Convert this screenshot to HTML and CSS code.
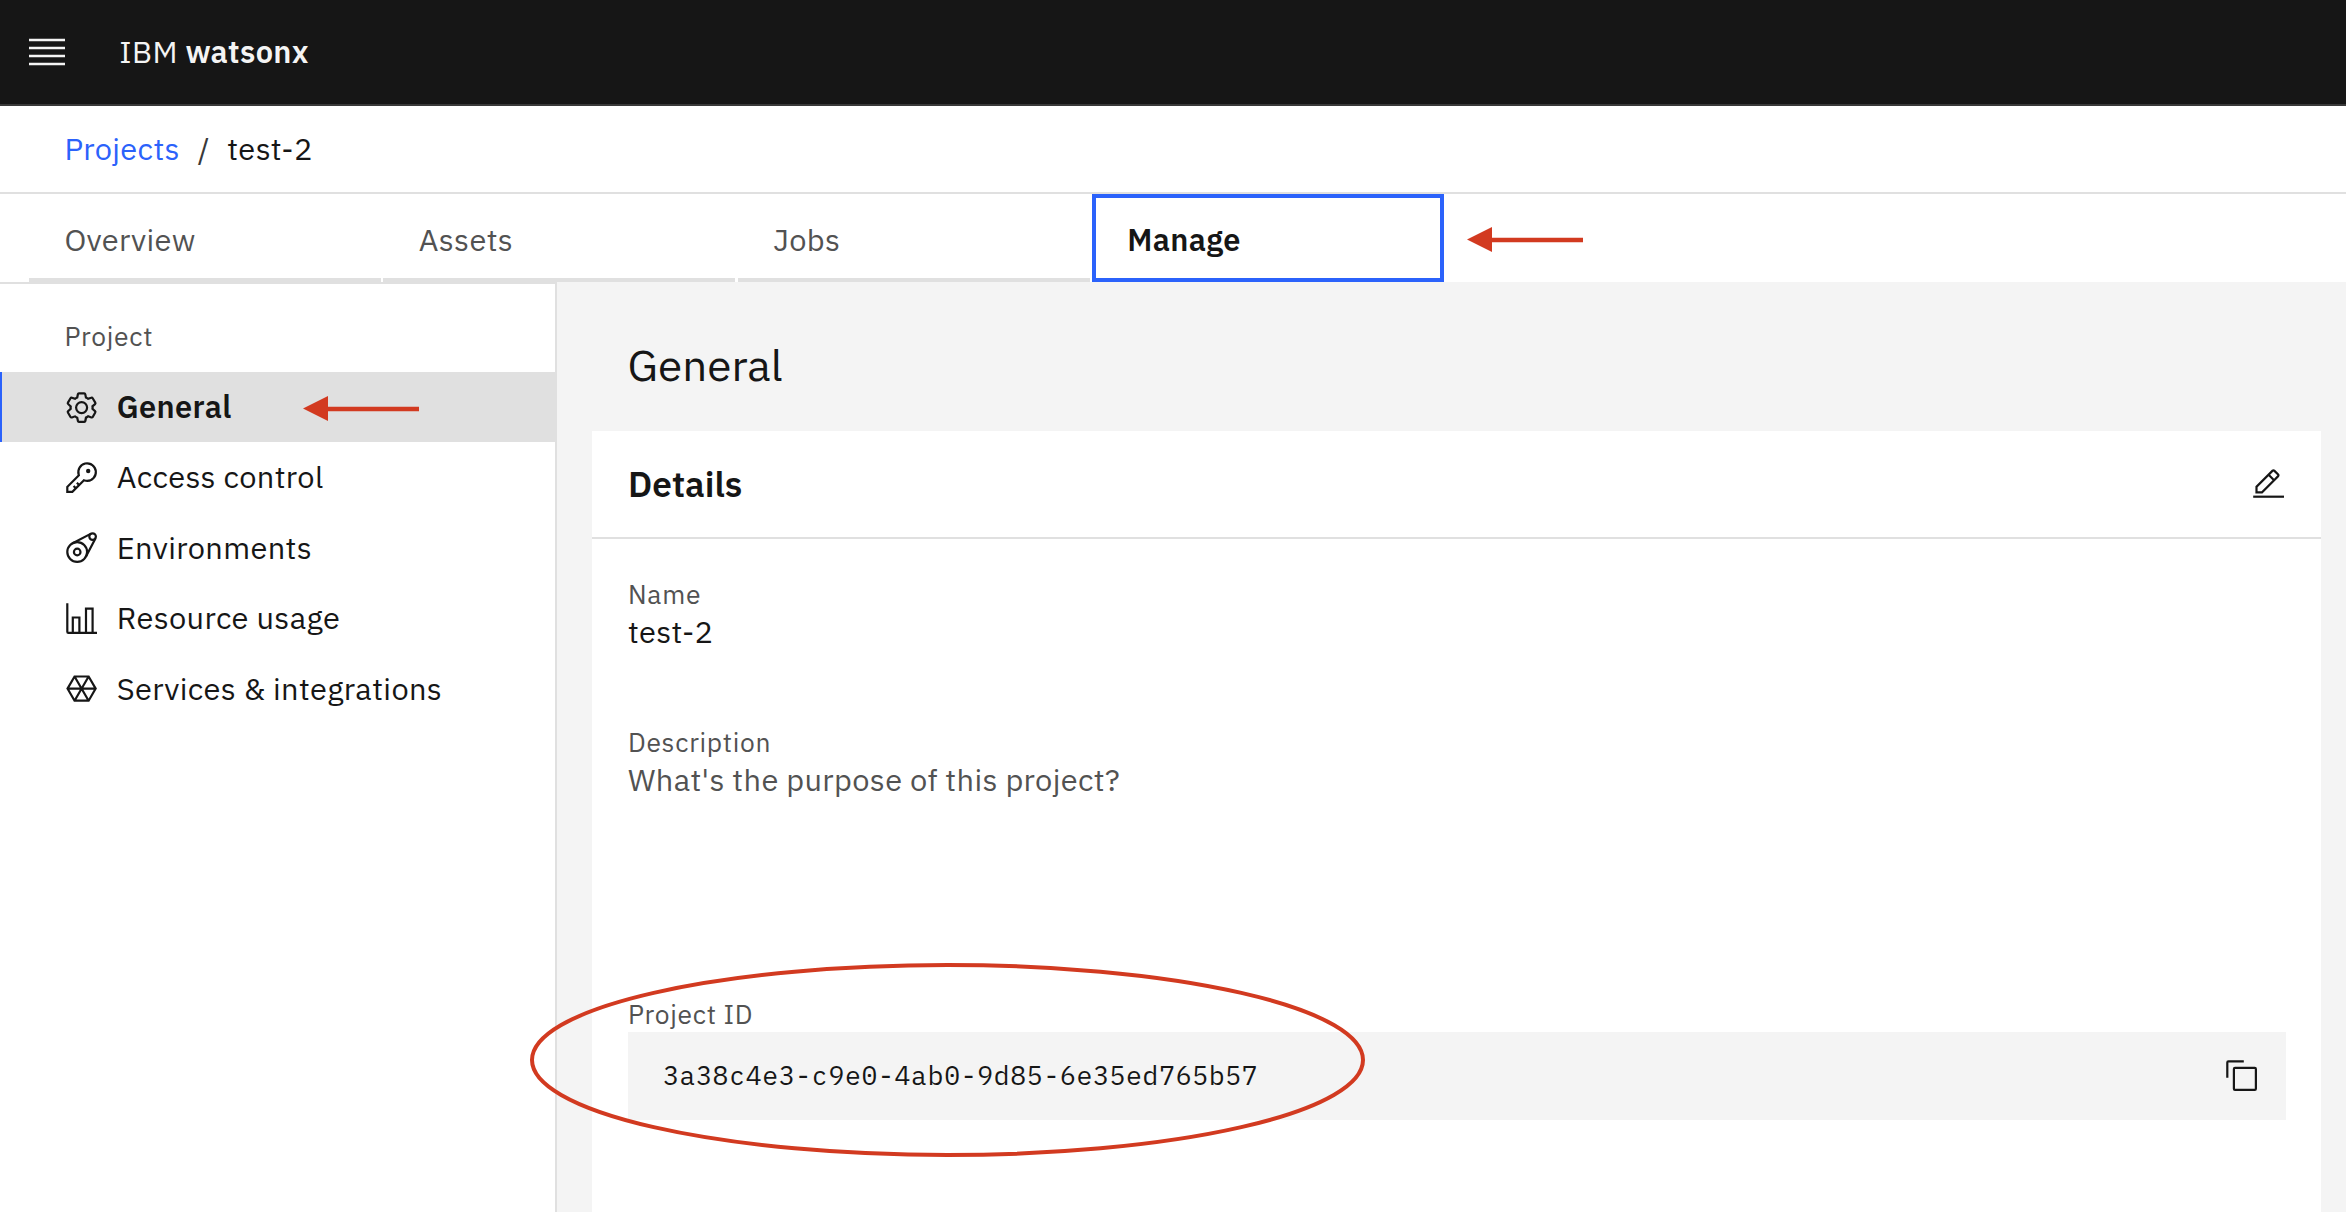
FILE: index.html
```html
<!DOCTYPE html>
<html lang="en">
<head>
<meta charset="utf-8">
<title>IBM watsonx</title>
<link rel="stylesheet" href="styles.css">
</head>
<body>
<header class="topbar">
  <svg class="menu-icon" viewBox="0 0 36 28"><path d="M0 2h36M0 10h36M0 18h36M0 26h36"/></svg>
  <div class="brand">IBM <b>watsonx</b></div>
</header>
<nav class="breadcrumb"><a>Projects</a><span class="slash">/</span><span>test-2</span></nav>
<nav class="tabs">
  <a class="tab">Overview</a>
  <a class="tab">Assets</a>
  <a class="tab">Jobs</a>
  <a class="tab active">Manage</a>
</nav>
<div class="layout">
  <aside class="sidebar">
    <div class="side-title">Project</div>
    <a class="item selected"><svg class="icon" viewBox="0 0 32 32"><path d="M27,16.76c0-.25,0-.5,0-.76s0-.51,0-.77l1.92-1.68A2,2,0,0,0,29.3,11L26.94,7a2,2,0,0,0-1.73-1,2,2,0,0,0-.64.1l-2.43.82a11.35,11.35,0,0,0-1.31-.75l-.51-2.52a2,2,0,0,0-2-1.61H13.64a2,2,0,0,0-2,1.61l-.51,2.52a11.48,11.48,0,0,0-1.32.75L7.43,6.06A2,2,0,0,0,6.79,6,2,2,0,0,0,5.06,7L2.7,11a2,2,0,0,0,.41,2.51L5,15.24c0,.25,0,.5,0,.76s0,.51,0,.77L3.11,18.45A2,2,0,0,0,2.7,21L5.06,25a2,2,0,0,0,1.73,1,2,2,0,0,0,.64-.1l2.43-.82a11.35,11.35,0,0,0,1.31.75l.51,2.52a2,2,0,0,0,2,1.61h4.72a2,2,0,0,0,2-1.61l.51-2.52a11.48,11.48,0,0,0,1.32-.75l2.42.82a2,2,0,0,0,.64.1,2,2,0,0,0,1.73-1L29.3,21a2,2,0,0,0-.41-2.51ZM25.21,24l-3.43-1.16a8.86,8.86,0,0,1-2.71,1.57L18.36,28H13.64l-.71-3.55a9.36,9.36,0,0,1-2.7-1.57L6.79,24,4.43,20l2.72-2.4a8.9,8.9,0,0,1,0-3.13L4.43,12,6.79,8l3.43,1.16a8.86,8.86,0,0,1,2.71-1.57L13.64,4h4.72l.71,3.55a9.36,9.36,0,0,1,2.7,1.57L25.21,8,27.57,12l-2.72,2.4a8.9,8.9,0,0,1,0,3.13L27.57,20Z"/><path d="M16,22a6,6,0,1,1,6-6A5.94,5.94,0,0,1,16,22Zm0-10a3.91,3.91,0,0,0-4,4,3.91,3.91,0,0,0,4,4,3.91,3.91,0,0,0,4-4A3.91,3.91,0,0,0,16,12Z"/></svg><span>General</span></a>
    <a class="item"><svg class="icon" viewBox="0 0 32 32"><path d="M21,2a8.9977,8.9977,0,0,0-8.6119,11.6118L2,24v6H8L18.3881,19.6118A9,9,0,1,0,21,2Zm0,16a7.0125,7.0125,0,0,1-2.0322-.3022L17.821,17.35l-.8472.8472-3.1811,3.1812L12.4141,20,11,21.4141l1.3787,1.3786-1.5859,1.586L9.4141,23,8,24.4141l1.3787,1.3786L7.1716,28H4V24.8284l9.8023-9.8023.8472-.8474-.3473-1.1467A7,7,0,1,1,21,18Z"/><circle cx="22" cy="10" r="2"/></svg><span>Access control</span></a>
    <a class="item"><svg class="icon line" viewBox="0 0 32 32"><circle cx="12" cy="20" r="9"/><circle cx="12" cy="20" r="3"/><circle cx="26" cy="6" r="3"/><path d="M7.9 12L24.6 3.3M20 24.1L28.7 7.4"/></svg><span>Environments</span></a>
    <a class="item"><svg class="icon" viewBox="0 0 32 32"><path d="M27,28V6H19V28H15V14H7V28H4V2H2V28a2,2,0,0,0,2,2H30V28ZM13,28H9V16h4Zm12,0H21V8h4Z"/></svg><span>Resource usage</span></a>
    <a class="item"><svg class="icon line" viewBox="0 0 32 32"><path d="M3.2 16L9.6 5H22.4L28.8 16L22.4 27H9.6ZM3 16H29M9.6 5L22.4 27M22.4 5L9.6 27"/></svg><span>Services &amp; integrations</span></a>
  </aside>
  <main class="main">
    <h1>General</h1>
    <section class="card">
      <div class="card-head"><h2>Details</h2><svg class="icon edit" viewBox="0 0 32 32"><path d="M2 26h28v2H2z"/><path d="M25.4,9c.8-.8.8-2,0-2.8l-3.6-3.6c-.8-.8-2-.8-2.8,0l-15,15V24h6.4L25.4,9z M20.4,4L24,7.6l-3,3L17.4,7L20.4,4z M6,22v-3.6l10-10l3.6,3.6l-10,10H6z"/></svg></div>
      <div class="card-body">
        <div class="field"><div class="label">Name</div><div class="value">test-2</div></div>
        <div class="field"><div class="label">Description</div><div class="value muted">What's the purpose of this project?</div></div>
        <div class="field project-id"><div class="label">Project ID</div>
          <div class="snippet"><code>3a38c4e3-c9e0-4ab0-9d85-6e35ed765b57</code><svg class="icon" viewBox="0 0 32 32"><path d="M28,10V28H10V10H28m0-2H10a2,2,0,0,0-2,2V28a2,2,0,0,0,2,2H28a2,2,0,0,0,2-2V10a2,2,0,0,0-2-2Z"/><path d="M4,18H2V4A2,2,0,0,1,4,2H18V4H4Z"/></svg></div>
        </div>
      </div>
    </section>
  </main>
</div>
<svg class="annotations" viewBox="0 0 2346 1212">
  <path class="head" d="M1467 239.5L1492 227V252Z"/><path d="M1490 240H1583"/>
  <path class="head" d="M303 408.5L328 396V421Z"/><path d="M326 409H419"/>
  <ellipse cx="947.5" cy="1060" rx="415.5" ry="95"/>
</svg>
</body>
</html>
```
FILE: styles.css
```css
* { box-sizing: border-box; }
body { margin: 0; height: 1212px; overflow: hidden; display: flex; flex-direction: column; position: relative; background: #fff; color: #161616; font-family: "IBM Plex Sans", "Noto Sans", sans-serif; font-size: 30.8px; line-height: 40px; letter-spacing: .352px; }
h1, h2 { margin: 0; letter-spacing: 0; }
b, .selected, .active { font-weight: 600; }
.topbar { flex: none; height: 106px; background: #161616; border-bottom: 2px solid #393939; display: flex; align-items: center; padding: 0 0 0 29px; color: #f4f4f4; }
.menu-icon { width: 36px; height: 28px; margin-right: 54.3px; fill: none; stroke: #f4f4f4; stroke-width: 2.6; }
.brand { padding-bottom: 2px; }
.breadcrumb { flex: none; height: 88px; border-bottom: 2px solid #e0e0e0; display: flex; align-items: center; padding: 0 0 2px 64.5px; }
.breadcrumb a { color: #2b62fb; }
.slash { margin: 0 17.4px 0 17.8px; color: #393939; }
.tabs { flex: none; height: 88px; display: flex; gap: 2.4px; padding-left: 29px; color: #525252; }
.tab { width: 352px; display: flex; align-items: center; padding: 6px 0 0 35.4px; border-bottom: 4px solid #e0e0e0; }
.tab.active { color: #161616; border: 4px solid #2b62fb; padding: 2px 0 0 31px; }
.layout { flex: 1; min-height: 0; display: flex; }
.sidebar { width: 557px; flex: none; border-top: 2px solid #e0e0e0; border-right: 2px solid #e0e0e0; }
.side-title { height: 88px; padding: 43px 0 0 64.5px; line-height: 18px; font-size: 26.4px; color: #525252; letter-spacing: .704px; }
.item { height: 70.4px; display: flex; align-items: center; gap: 17.6px; padding-left: 64px; }
.item span { padding-bottom: 2.4px; }
.item.selected { background: #e0e0e0; border-left: 2px solid #2b62fb; padding-left: 62px; }
.icon { width: 35.2px; height: 35.2px; flex: none; fill: #161616; }
.icon.line { fill: none; stroke: #161616; stroke-width: 2; }
.icon.edit { margin-top: 1px; }
.main { flex: 1; background: #f4f4f4; padding: 0 25px 0 35px; display: flex; flex-direction: column; }
h1 { flex: none; height: 149px; padding: 62.6px 0 0 35.5px; font-size: 44px; font-weight: 400; }
.card { flex: 1; background: #fff; }
.card-head { height: 108px; border-bottom: 2px solid #e0e0e0; display: flex; align-items: center; justify-content: space-between; padding: 0 35px 0 36px; }
h2 { font-size: 35.2px; font-weight: 600; }
.card-body { padding: 37px 35px 0 36px; display: flex; flex-direction: column; gap: 72px; }
.label { font-size: 26.4px; line-height: 36px; color: #525252; letter-spacing: .704px; }
.value { margin: -1px 0 1px; }
.muted { color: #525252; }
.project-id { margin-top: 124px; }
.snippet { height: 88px; background: #f4f4f4; display: flex; align-items: center; justify-content: space-between; padding: 0 26.8px 0 35px; }
code { font-family: "IBM Plex Mono", "Liberation Mono", monospace; font-size: 26.4px; letter-spacing: .704px; padding-bottom: 2px; }
.annotations { position: absolute; inset: 0; width: 2346px; height: 1212px; fill: none; stroke: #d23a20; stroke-width: 4.6; pointer-events: none; }
.annotations .head { fill: #d23a20; stroke: none; }
.annotations ellipse { stroke-width: 4; }
```
